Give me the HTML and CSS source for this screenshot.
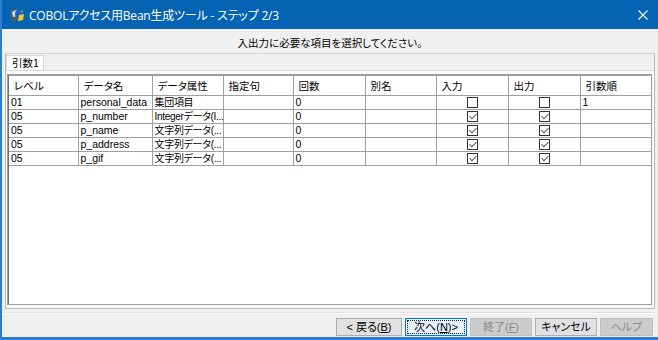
FILE: index.html
```html
<!DOCTYPE html>
<html>
<head>
	<meta charset="utf-8">
	<title>COBOLアクセス用Bean生成ツール</title>
	<link rel="stylesheet" href="styles.css">
</head>
<body>
<div class="window">
	<div class="titlebar">
		<svg class="appicon" width="15" height="14" viewBox="0 0 15 14">
			<path d="M1 3 L6 1 L9 3 L9 12 L4 13 L1 11 Z" fill="#5a5a5a"/>
			<path d="M2 4 L6 2 L8 4 L8 8 L3 9 Z" fill="#d8d8d8"/>
			<circle cx="9" cy="6" r="4" fill="#1c5fc9"/>
			<path d="M9 7 L14 6 L13 12 L8 13 Z" fill="#e8d21c"/>
			<path d="M10 3 L13 2 L13 5 Z" fill="#4caf50"/>
		</svg>
		<span class="title">COBOLアクセス用Bean生成ツール - ステップ 2/3</span>
		<svg class="close" width="10" height="10" viewBox="0 0 10 10">
			<path d="M0.5 0.5 L9.5 9.5 M9.5 0.5 L0.5 9.5" stroke="#fff" stroke-width="1.1"/>
		</svg>
	</div>
	<div class="body">
		<p class="prompt">入出力に必要な項目を選択してください。</p>
		<div class="frame">
			<div class="tabs"><span class="tab">引数1</span></div>
			<div class="panel">
				<div class="grid">
					<table>
						<colgroup>
							<col style="width:69px"><col style="width:74px"><col style="width:71px">
							<col style="width:70px"><col style="width:72px"><col style="width:71px">
							<col style="width:72px"><col style="width:72px"><col style="width:71px">
						</colgroup>
						<tr class="head">
							<th>レベル</th><th>データ名</th><th>データ属性</th><th>指定句</th><th>回数</th><th>別名</th><th>入力</th><th>出力</th><th>引数順</th>
						</tr>
						<tr>
							<td>01</td><td>personal_data</td><td class="jp">集団項目</td><td></td><td>0</td><td></td>
							<td class="chk"><span class="box"></span></td><td class="chk"><span class="box"></span></td><td>1</td>
						</tr>
						<tr>
							<td>05</td><td>p_number</td><td class="jp">Integerデータ(I...</td><td></td><td>0</td><td></td>
							<td class="chk"><span class="box on"></span></td><td class="chk"><span class="box on"></span></td><td></td>
						</tr>
						<tr>
							<td>05</td><td>p_name</td><td class="jp">文字列データ(...</td><td></td><td>0</td><td></td>
							<td class="chk"><span class="box on"></span></td><td class="chk"><span class="box on"></span></td><td></td>
						</tr>
						<tr>
							<td>05</td><td>p_address</td><td class="jp">文字列データ(...</td><td></td><td>0</td><td></td>
							<td class="chk"><span class="box on"></span></td><td class="chk"><span class="box on"></span></td><td></td>
						</tr>
						<tr>
							<td>05</td><td>p_gif</td><td class="jp">文字列データ(...</td><td></td><td>0</td><td></td>
							<td class="chk"><span class="box on"></span></td><td class="chk"><span class="box on"></span></td><td></td>
						</tr>
					</table>
				</div>
			</div>
		</div>
		<div class="sep"></div>
		<div class="buttons">
			<button class="btn w66">&lt; 戻る(<u>B</u>)</button>
			<button class="btn w62 focus"><span>次へ(<u>N</u>)&gt;</span></button>
			<button class="btn w62" disabled>終了(<u>F</u>)</button>
			<button class="btn w62">キャンセル</button>
			<button class="btn w53" disabled>ヘルプ</button>
		</div>
	</div>
</div>
</body>
</html>
```

FILE: styles.css
```css
body {
	margin: 0;
	background-color: #f0f0f0;
	font-family: "Liberation Sans", "Noto Sans CJK JP", sans-serif;
	font-feature-settings: "palt";
	color: #000;
}
.window {
	width: 658px;
	height: 340px;
	box-sizing: border-box;
	border-left: 2px solid #2b7dd0;
	border-bottom: 3px solid #2b7dd0;
	display: flex;
	flex-direction: column;
	overflow: hidden;
}
.titlebar {
	height: 29px;
	margin-left: -2px;
	background-color: #0563b3;
	color: #fff;
	display: flex;
	align-items: center;
	font-family: "Open Sans", "Noto Sans CJK JP", sans-serif;
	font-size: 12px;
}
.appicon {
	margin-left: 10px;
	margin-right: 4px;
}
.title {
	flex: 1;
	letter-spacing: -0.2px;
}
.close {
	margin-right: 10px;
}
.body {
	flex: 1;
	padding: 0 3px;
	display: flex;
	flex-direction: column;
}
.prompt {
	margin: 0;
	height: 24px;
	box-sizing: border-box;
	padding-top: 6px;
	line-height: 16px;
	text-align: center;
	font-family: "Noto Sans CJK JP", sans-serif;
	font-size: 10.5px;
}
.frame {
	height: 256px;
	box-sizing: border-box;
	border: 1px solid #b9b9b9;
	border-top-color: #d4d4d4;
	display: flex;
	flex-direction: column;
}
.tabs {
	height: 16px;
	display: flex;
	align-items: flex-end;
}
.tab {
	height: 15px;
	box-sizing: border-box;
	padding: 0 4px 0 5px;
	background-color: #fff;
	border: 1px solid #d9d9d9;
	border-bottom: none;
	font-family: "Noto Sans CJK JP", sans-serif;
	font-size: 10.5px;
	line-height: 14px;
	white-space: nowrap;
}
.panel {
	flex: 1;
	border-top: 1px solid #d9d9d9;
	background-color: #fbfbfb;
	padding: 3px 2px 0 1px;
}
.grid {
	height: 231px;
	box-sizing: border-box;
	border: 1px solid #9c9c9c;
	box-shadow: inset 1px 1px 0 #6f6f6f;
	background-color: #fff;
	overflow: hidden;
}
table {
	border-collapse: collapse;
	table-layout: fixed;
	width: 642px;
	margin: 0 0 0 1px;
	font-size: 10.5px;
}
th, td {
	border-right: 1px solid #a0a0a0;
	border-bottom: 1px solid #a0a0a0;
	padding: 0 2px;
	white-space: nowrap;
	overflow: hidden;
	text-align: left;
	font-weight: normal;
}
th {
	height: 19px;
	padding-left: 5px;
	border-top: 1px solid #a0a0a0;
}
td {
	height: 13px;
	line-height: 13px;
}
td.jp {
	font-size: 10px;
	letter-spacing: -0.3px;
	padding: 0 0 0 2px;
}
td.chk {
	text-align: center;
	padding: 0;
}
.box {
	display: inline-block;
	width: 11px;
	height: 11px;
	box-sizing: border-box;
	border: 1px solid #333;
	background-color: #fff;
	vertical-align: middle;
	margin-top: -1px;
	position: relative;
}
.box.on::after {
	content: "";
	position: absolute;
	left: 1px;
	top: 0px;
	width: 6px;
	height: 3px;
	border-left: 1px solid #606060;
	border-bottom: 1px solid #606060;
	transform: translate(0.5px, 1.5px) rotate(-45deg);
}
.sep {
	height: 1px;
	margin-top: 3px;
	background-color: #e2e2e2;
	border-bottom: 1px solid #fafafa;
	margin-bottom: 4px;
}
.buttons {
	display: flex;
	justify-content: flex-end;
	gap: 3px;
	padding-right: 2px;
}
.btn {
	height: 18px;
	padding: 0;
	background-color: #e1e1e1;
	border: 1px solid #adadad;
	font-family: "Liberation Sans", "Noto Sans CJK JP", sans-serif;
	font-feature-settings: "palt";
	font-size: 11px;
	line-height: 14px;
	color: #000;
}
.btn:disabled {
	background-color: #cccccc;
	border-color: #bfbfbf;
	color: #8a8a8a;
}
.btn.focus {
	border-color: #0078d7;
	background-color: #e5f1fb;
	padding: 1px;
}
.btn.focus span {
	display: block;
	height: 14px;
	outline: 1px dotted #222;
	outline-offset: -1px;
}
.w66 { width: 66px; }
.w62 { width: 62px; }
.w53 { width: 53px; }
```
